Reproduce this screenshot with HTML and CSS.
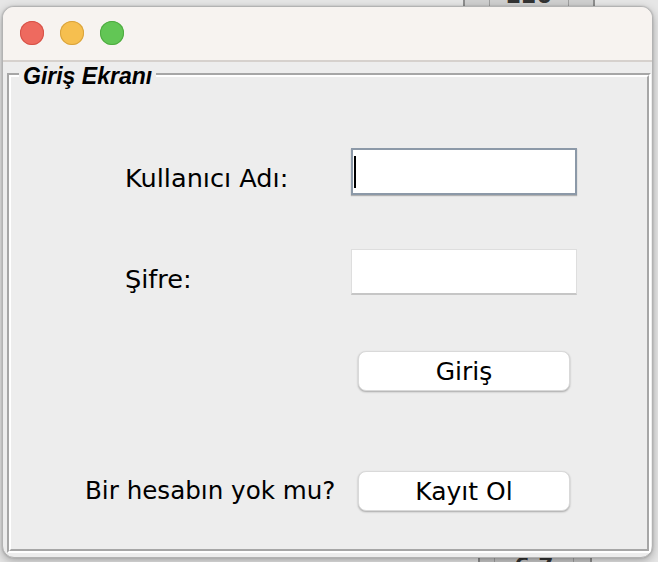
FILE: index.html
```html
<!DOCTYPE html>
<html lang="tr">
<head>
<meta charset="utf-8">
<title>Giriş Ekranı</title>
<link rel="stylesheet" href="styles.css">
</head>
<body>
<div class="desk">
  <div class="bgwin bgwin-top"><span class="bgcell">220</span></div>
  <div class="bgwin bgwin-bottom"><span class="bgcell">6.7</span></div>
</div>
<div class="window">
  <div class="titlebar">
    <span class="light red"></span>
    <span class="light yellow"></span>
    <span class="light green"></span>
  </div>
  <div class="content">
    <div class="group">
      <span class="group-title">Giriş Ekranı</span>
      <div class="group-inner">
        <div class="form">
          <div class="row row-user">
            <span class="label label-indent">Kullanıcı Adı:</span>
            <div class="field field-focus"><span class="caret"></span></div>
          </div>
          <div class="row row-pass">
            <span class="label label-indent">Şifre:</span>
            <div class="field"></div>
          </div>
          <div class="row row-login">
            <span></span>
            <button class="btn" type="button">Giriş</button>
          </div>
          <div class="row row-register">
            <span class="label label-tight">Bir hesabın yok mu?</span>
            <button class="btn" type="button">Kayıt Ol</button>
          </div>
        </div>
      </div>
    </div>
  </div>
</div>
</body>
</html>
```
FILE: styles.css
```css
* { box-sizing: border-box; }

html, body {
  margin: 0;
  padding: 0;
}

body {
  width: 658px;
  height: 562px;
  overflow: hidden;
  background: #e6e6e6;
  position: relative;
  font-family: "DejaVu Sans", "Liberation Sans", sans-serif;
}

/* background desktop windows peeking out */
.desk {
  position: absolute;
  inset: 0;
}
.bgwin {
  position: absolute;
  background: #e4e4e4;
  border-left: 2px solid #8e8e8e;
  border-right: 2px solid #8e8e8e;
}
.bgwin-top {
  left: 463px;
  top: 0;
  width: 132px;
  height: 8px;
  background: #d0d0d0;
}
.bgwin-bottom {
  left: 478px;
  top: 554px;
  width: 114px;
  height: 8px;
  background: #c8c8c8;
}
.bgcell {
  position: absolute;
  left: 24px;
  top: -16px;
  width: 80px;
  height: 24px;
  border-left: 1px solid #a0a0a0;
  border-right: 1px solid #a0a0a0;
  font: bold 22px "DejaVu Sans", sans-serif;
  color: #333;
  text-align: center;
  line-height: 24px;
}
.bgwin-bottom .bgcell {
  top: 0;
  left: 14px;
}

/* main window */
.window {
  position: absolute;
  left: 2px;
  top: 6px;
  width: 651px;
  height: 552px;
  border: 1px solid #b3b3b3;
  border-radius: 12px;
  background: #ededed;
  overflow: hidden;
  box-shadow: 0 3px 10px rgba(0, 0, 0, 0.28), 0 0 2px rgba(0, 0, 0, 0.2);
}

.titlebar {
  height: 55px;
  background: #f7f3f0;
  border-bottom: 2px solid #d6d1cd;
  display: flex;
  align-items: center;
  padding-left: 17px;
  gap: 16px;
  padding-bottom: 1px;
}

.light {
  width: 24px;
  height: 24px;
  border-radius: 50%;
  display: block;
}
.red { background: #ee6a5f; box-shadow: inset 0 0 0 1px #d65248; }
.yellow { background: #f6bf4f; box-shadow: inset 0 0 0 1px #d9a33d; }
.green { background: #62c655; box-shadow: inset 0 0 0 1px #4fab41; }

.content {
  padding: 11px 0 0 4px;
}

/* etched titled border */
.group {
  position: relative;
  width: 644px;
  height: 480px;
  border: 2px solid;
  border-color: #a6a6a6 #ffffff #ffffff #a6a6a6;
}
.group-inner {
  height: 100%;
  border: 2px solid;
  border-color: #ffffff #a6a6a6 #a6a6a6 #ffffff;
}
.group-title {
  position: absolute;
  left: 10px;
  top: -10px;
  padding: 0 4px;
  background: #ededed;
  font: italic bold 23px/23px "Liberation Sans", Arial, sans-serif;
  color: #000;
}

.form {
  padding: 71px 0 0 72px;
  display: flex;
  flex-direction: column;
}

.row {
  display: grid;
  grid-template-columns: 268px 226px;
  align-items: start;
}
.row-user { height: 47px; }
.row-pass { height: 46px; margin-top: 54px; }
.row-login { height: 40px; margin-top: 56px; }
.row-register { height: 40px; margin-top: 80px; }

.label {
  font-size: 25.6px;
  line-height: 25px;
  color: #000;
  white-space: nowrap;
}
.label-indent {
  padding-left: 42px;
  margin-top: 18px;
}
.label-tight {
  font-size: 24.6px;
  margin-left: 2px;
  margin-top: 7px;
}

.field {
  height: 100%;
  background: #fff;
  border: 1px solid #dedede;
  border-bottom: 2px solid #c6c6c6;
  position: relative;
}
.field-focus {
  border: 2px solid #8c99a8;
  box-shadow: 0 1px 1px rgba(0, 0, 0, 0.25);
  padding: 6px 0 0 1px;
}
.caret {
  display: block;
  width: 2px;
  height: 32px;
  background: #000;
}

.btn {
  margin-left: 7px;
  width: 212px;
  height: 40px;
  background: #fff;
  border: 1px solid #d9d9d9;
  border-radius: 8px;
  box-shadow: 0 1px 2px rgba(0, 0, 0, 0.3);
  font-family: "DejaVu Sans", sans-serif;
  font-size: 25px;
  line-height: 25px;
  color: #000;
  padding: 0;
}
```
